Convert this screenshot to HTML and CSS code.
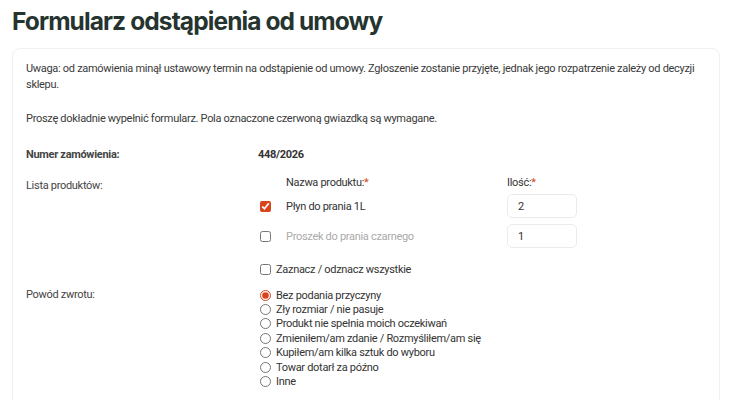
FILE: index.html
```html
<!DOCTYPE html>
<html lang="pl">
<head>
  <meta charset="UTF-8">
  <title>Formularz odstąpienia od umowy</title>
  <link rel="stylesheet" href="styles.css">
</head>
<body>

  <h1>Formularz odstąpienia od umowy</h1>

  <div class="form-card">
    <p class="note">Uwaga: od zamówienia minął ustawowy termin na odstąpienie od umowy. Zgłoszenie zostanie przyjęte, jednak jego rozpatrzenie zależy od decyzji sklepu.</p>
    <p class="note">Proszę dokładnie wypełnić formularz. Pola oznaczone czerwoną gwiazdką są wymagane.</p>

    <div class="row row-order">
      <div class="label bold">Numer zamówienia:</div>
      <div class="value bold">448/2026</div>
    </div>

    <div class="row row-products">
      <div class="label">Lista produktów:</div>
      <div class="value">
        <div class="products">
          <div class="prod-head">
            <span class="col-check"></span>
            <span class="col-name">Nazwa produktu:<span class="req">*</span></span>
            <span class="col-qty">Ilość:<span class="req">*</span></span>
          </div>
          <div class="prod-row">
            <span class="col-check"><input type="checkbox" checked></span>
            <span class="col-name">Płyn do prania 1L</span>
            <span class="col-qty"><input type="text" class="qty" value="2"></span>
          </div>
          <div class="prod-row off">
            <span class="col-check"><input type="checkbox"></span>
            <span class="col-name">Proszek do prania czarnego</span>
            <span class="col-qty"><input type="text" class="qty" value="1"></span>
          </div>
        </div>
        <label class="check-all"><input type="checkbox"> Zaznacz / odznacz wszystkie</label>
      </div>
    </div>

    <div class="row row-reason">
      <div class="label">Powód zwrotu:</div>
      <div class="value reasons">
        <label><input type="radio" name="reason" checked> Bez podania przyczyny</label>
        <label><input type="radio" name="reason"> Zły rozmiar / nie pasuje</label>
        <label><input type="radio" name="reason"> Produkt nie spełnia moich oczekiwań</label>
        <label><input type="radio" name="reason"> Zmieniłem/am zdanie / Rozmyśliłem/am się</label>
        <label><input type="radio" name="reason"> Kupiłem/am kilka sztuk do wyboru</label>
        <label><input type="radio" name="reason"> Towar dotarł za późno</label>
        <label><input type="radio" name="reason"> Inne</label>
      </div>
    </div>
  </div>

</body>
</html>
```

FILE: styles.css
```css
body {
  font-family: Roboto, "Noto Sans", sans-serif;
  background: #fff;
  color: #333;
  margin: 0;
  padding: 0 11px 0 12px;
  font-size: 11px;
  letter-spacing: -0.3px;
}

h1 {
  font-family: Inter, sans-serif;
  font-size: 24.5px;
  font-weight: 700;
  color: #26342f;
  margin: 6px 0 12px 0;
  letter-spacing: -0.9px;
}

.form-card {
  border: 1px solid #f1f1f1;
  border-radius: 8px;
  padding: 12px 8px 20px 13px;
}

.note {
  margin: 0 0 18px 0;
  line-height: 16px;
  color: #3a3a3a;
}

.row {
  display: grid;
  grid-template-columns: 232px 1fr;
}

.row-order {
  padding-top: 3px;
}

.row-products {
  margin-top: 15px;
}

.row-reason {
  margin-top: 12px;
}

.bold {
  font-weight: 700;
  color: #333;
}

.label {
  color: #444;
}

.row-products .label {
  margin-top: 3px;
}

.products {
  display: flex;
  flex-direction: column;
}

.prod-head, .prod-row {
  display: flex;
  align-items: center;
}

.prod-head {
  height: 16px;
  margin-top: -2px;
  margin-bottom: 1px;
}

.prod-row {
  height: 30px;
}

.col-check {
  width: 28px;
  display: flex;
  align-items: center;
}

.col-name {
  width: 221px;
}

.off .col-name {
  color: #aaa;
}

.req {
  color: #d9441c;
}

input[type="checkbox"], input[type="radio"] {
  accent-color: #d9441c;
  margin: 0 0 0 2px;
  width: 11px;
  height: 11px;
}

.qty {
  width: 70px;
  height: 24px;
  box-sizing: border-box;
  border: 1px solid #ebebeb;
  border-radius: 5px;
  padding: 0 10px;
  font-family: Roboto, sans-serif;
  font-size: 11px;
  color: #333;
}

.check-all {
  display: flex;
  align-items: center;
  gap: 5px;
  margin-top: 12px;
}

.reasons {
  display: flex;
  flex-direction: column;
}

.reasons label {
  display: flex;
  align-items: center;
  gap: 5px;
  height: 14.4px;
}
```
